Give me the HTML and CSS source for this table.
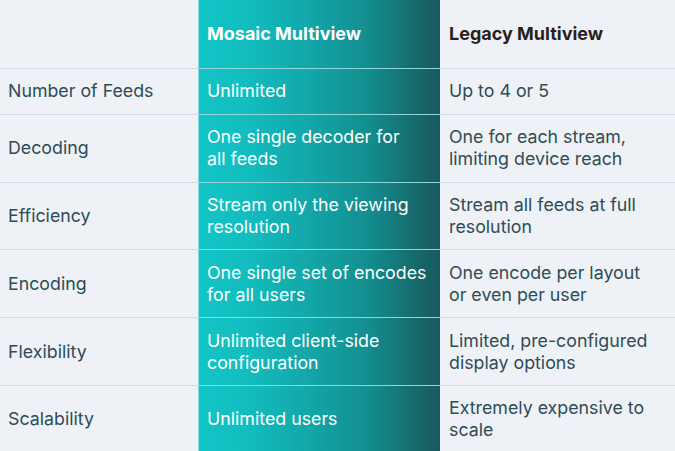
FILE: index.html
```html
<!DOCTYPE html>
<html>
<head>
<meta charset="utf-8">
<link rel="stylesheet" href="styles.css">
</head>
<body>
<div class="table">
  <div class="cell head"></div>
  <div class="cell head mosaic">Mosaic Multiview</div>
  <div class="cell head legacy">Legacy Multiview</div>

  <div class="cell label">Number of Feeds</div>
  <div class="cell mosaic">Unlimited</div>
  <div class="cell legacy">Up to 4 or 5</div>

  <div class="cell label">Decoding</div>
  <div class="cell mosaic">One single decoder for<br>all feeds</div>
  <div class="cell legacy">One for each stream,<br>limiting device reach</div>

  <div class="cell label">Efficiency</div>
  <div class="cell mosaic">Stream only the viewing<br>resolution</div>
  <div class="cell legacy">Stream all feeds at full<br>resolution</div>

  <div class="cell label">Encoding</div>
  <div class="cell mosaic">One single set of encodes<br>for all users</div>
  <div class="cell legacy">One encode per layout<br>or even per user</div>

  <div class="cell label">Flexibility</div>
  <div class="cell mosaic">Unlimited client-side<br>configuration</div>
  <div class="cell legacy">Limited, pre-configured<br>display options</div>

  <div class="cell label">Scalability</div>
  <div class="cell mosaic">Unlimited users</div>
  <div class="cell legacy">Extremely expensive to<br>scale</div>
</div>
</body>
</html>
```
FILE: styles.css
```css
html, body {
  margin: 0;
  padding: 0;
  background: #eef2f6;
}
body {
  font-family: Inter, "Open Sans", sans-serif;
  font-size: 17.8px;
  line-height: 22px;
  color: #2f4b57;
  width: 675px;
  height: 451px;
  overflow: hidden;
}
.table {
  display: grid;
  grid-template-columns: 198px 242px 235px;
}
.cell {
  border-top: 1px solid #cfdde6;
  padding: 11.4px 4px 11.4px 9px;
  display: flex;
  flex-direction: column;
  justify-content: center;
  white-space: nowrap;
}
.cell.label {
  padding-left: 8px;
}
.cell.head {
  border-top: none;
  height: 68px;
  padding-top: 0;
  padding-bottom: 0;
  box-sizing: border-box;
  font-weight: 700;
  font-size: 18px;
}
.mosaic {
  color: #ffffff;
  background: linear-gradient(to right, #12c4c6 0%, #12bdbf 20%, #13a7a9 45%, #148e90 70%, #16696b 90%, #165a5d 100%);
  border-top-color: #8fd6d8;
  border-left: 1px solid #7fe0e2;
  padding-left: 8px;
}
.head.legacy {
  color: #2b1f1b;
}
```
